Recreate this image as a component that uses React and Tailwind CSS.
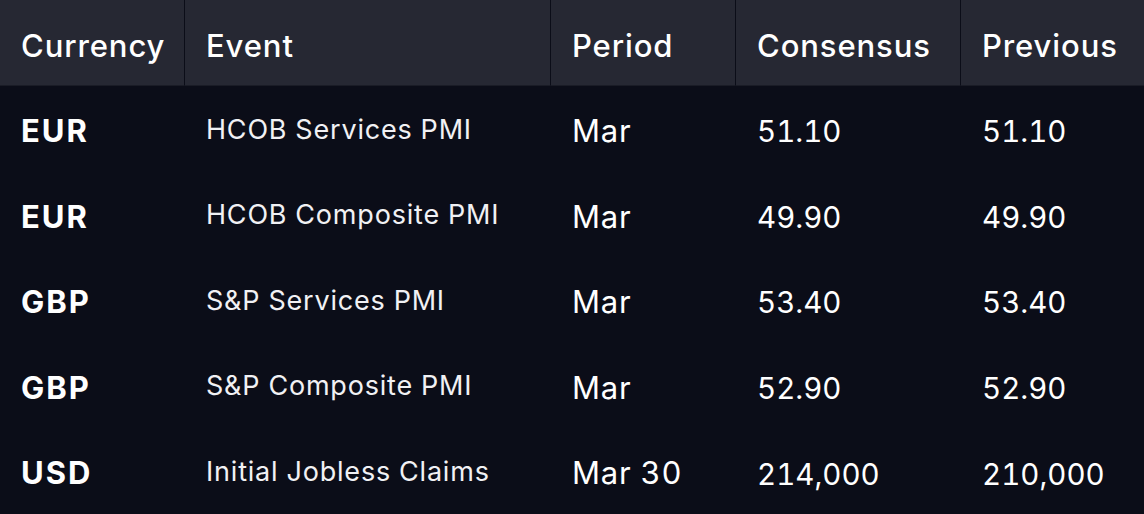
import React from 'react';

const ROWS = [
  { currency: 'EUR', event: 'HCOB Services PMI', period: 'Mar', consensus: '51.10', previous: '51.10' },
  { currency: 'EUR', event: 'HCOB Composite PMI', period: 'Mar', consensus: '49.90', previous: '49.90' },
  { currency: 'GBP', event: 'S&P Services PMI', period: 'Mar', consensus: '53.40', previous: '53.40' },
  { currency: 'GBP', event: 'S&P Composite PMI', period: 'Mar', consensus: '52.90', previous: '52.90' },
  { currency: 'USD', event: 'Initial Jobless Claims', period: 'Mar 30', consensus: '214,000', previous: '210,000' },
];

const COLS = 'grid grid-cols-[185px_366px_185px_225px_1fr]';

export default function App() {
  return (
    <div className="w-[1144px] h-[514px] bg-[#0b0d18] text-white overflow-hidden" style={{ fontFamily: 'Inter, "Liberation Sans", sans-serif' }}>
      {/* header */}
      <div className={`${COLS} h-[86px] bg-[#262833]`}>
        {['Currency', 'Event', 'Period', 'Consensus', 'Previous'].map((h, i) => (
          <div
            key={h}
            className={`flex items-center pl-[21px] pt-[7px] text-[31px] font-medium tracking-[0.9px] ${i < 4 ? 'border-r border-[#0b0d18]' : ''} border-b border-b-[#1a1c26]`}
          >
            {h}
          </div>
        ))}
      </div>

      {/* rows */}
      {ROWS.map((r, i) => (
        <div key={i} className={`${COLS} h-[85.6px] items-center pt-[5px] tabular-nums`}>
          <div className="pl-[21px] text-[31px] font-bold tracking-[2px]">{r.currency}</div>
          <div className="pl-[21px] text-[27px] font-normal tracking-[0.8px] text-[#f1f1f4] -mt-[3px]">{r.event}</div>
          <div className="pl-[21px] text-[31px] font-normal tracking-[0.8px]">{r.period}</div>
          <div className="pl-[21px] text-[29.5px] font-normal">{r.consensus}</div>
          <div className="pl-[21px] text-[29.5px] font-normal">{r.previous}</div>
        </div>
      ))}
    </div>
  );
}
